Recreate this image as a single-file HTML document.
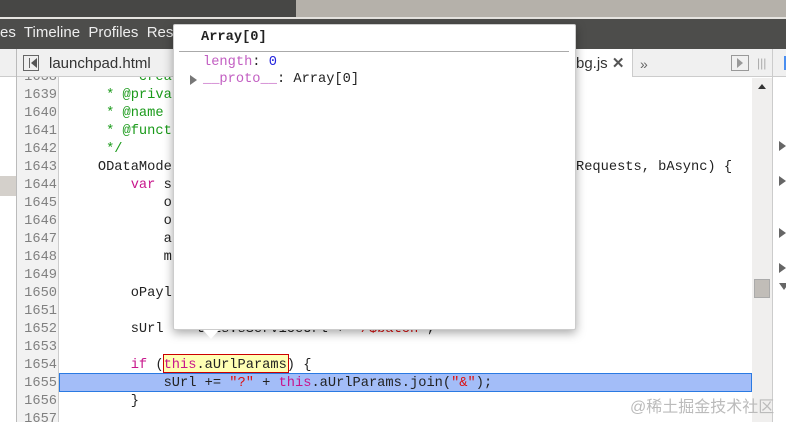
<!DOCTYPE html>
<html><head><meta charset="utf-8"><style>
*{margin:0;padding:0;box-sizing:border-box}
body{width:786px;height:422px;overflow:hidden;background:#fff;position:relative;font-family:"Liberation Sans",sans-serif}
.a{position:absolute}
.mono{font-family:"Liberation Mono",monospace;font-size:13.7px;white-space:pre;line-height:18px}
.ln{position:absolute;left:16px;width:41px;text-align:right;color:#808080;font-family:"Liberation Mono",monospace;font-size:13.7px;line-height:18px}
.cl{position:absolute;left:65px;color:#222}
.g{color:#1a9a1a}.k{color:#c8168c}.s{color:#d11}
</style></head><body>
<div class="a" style="left:0;top:0;width:296px;height:17px;background:#474745"></div>
<div class="a" style="left:296px;top:0;width:490px;height:17px;background:#b5b1aa"></div>
<div class="a" style="left:0;top:17px;width:786px;height:2px;background:#e6e4e0"></div>
<div class="a" style="left:0;top:19px;width:786px;height:30px;background:#4d4d4b"></div>
<div class="a" style="left:0;top:24px;color:#eee;font-size:15px;line-height:18px;white-space:pre">es  Timeline  Profiles  Res</div>
<div class="a" style="left:0;top:49px;width:786px;height:28px;background:#f0f0f0;border-bottom:1px solid #ccc"></div>
<div class="a" style="left:16px;top:49px;width:1px;height:373px;background:#bbb"></div>
<div class="a" style="left:23px;top:55px;width:16px;height:16px;border:1.5px solid #666"></div>
<div class="a" style="left:29px;top:58px;width:1px;height:10px;background:#666"></div>
<div class="a" style="left:31px;top:58px;width:0;height:0;border-top:5px solid transparent;border-bottom:5px solid transparent;border-right:6px solid #555"></div>
<div class="a" style="left:49px;top:54px;color:#333;font-size:15px;line-height:20px">launchpad.html</div>
<div class="a" style="left:575px;top:49px;width:58px;height:28px;background:#fff;border-right:1px solid #ccc"></div>
<div class="a" style="left:576px;top:54px;color:#333;font-size:15px;line-height:20px">bg.js <b style="color:#555">✕</b></div>
<div class="a" style="left:640px;top:54px;color:#666;font-size:14px;line-height:20px">»</div>
<div class="a" style="left:731px;top:55px;width:18px;height:16px;border:1.5px solid #999"></div>
<div class="a" style="left:737px;top:58px;width:0;height:0;border-top:5px solid transparent;border-bottom:5px solid transparent;border-left:6px solid #999"></div>
<div class="a" style="left:757px;top:56px;color:#aaa;font-size:12px">|||</div>
<div class="a" style="left:772px;top:49px;width:1px;height:373px;background:#ccc"></div>
<div class="a" style="left:784px;top:56px;width:2px;height:14px;background:#4a8ef0"></div>
<div class="a" style="left:0;top:77px;width:16px;height:345px;background:#fff"></div>
<div class="a" style="left:0;top:176px;width:16px;height:20px;background:#d4d0cb"></div>
<div class="a" style="left:17px;top:77px;width:42px;height:345px;background:#f2f2f2;border-right:1px solid #ccc"></div>
<div class="a" style="left:752px;top:78px;width:20px;height:344px;background:#f0efee"></div>
<div class="a" style="left:758px;top:84px;width:0;height:0;border-left:4px solid transparent;border-right:4px solid transparent;border-bottom:5px solid #333"></div>
<div class="a" style="left:754px;top:279px;width:16px;height:19px;background:#c1bdb8;border:1px solid #aaa"></div>
<div class="a" style="left:779px;top:141px;border-top:5px solid transparent;border-bottom:5px solid transparent;border-left:7px solid #666"></div>
<div class="a" style="left:779px;top:176px;border-top:5px solid transparent;border-bottom:5px solid transparent;border-left:7px solid #666"></div>
<div class="a" style="left:779px;top:228px;border-top:5px solid transparent;border-bottom:5px solid transparent;border-left:7px solid #666"></div>
<div class="a" style="left:779px;top:263px;border-top:5px solid transparent;border-bottom:5px solid transparent;border-left:7px solid #666"></div>
<div class="a" style="left:779px;top:283px;border-left:5px solid transparent;border-right:5px solid transparent;border-top:7px solid #666"></div>
<div class="a" style="left:59px;top:373px;width:693px;height:19px;background:#a3bdf8;border:1px solid #2a7ae2"></div>
<div class="a" style="left:163px;top:354px;width:126px;height:19px;background:#ffffb4;border:1px solid #c00"></div>
<div style="position:absolute;left:0;top:77px;width:752px;height:345px;overflow:hidden">
<div class="a" style="left:0;top:-8px">
<div class="ln" style="top:0">1638</div><div class="cl mono g" style="top:0">         create</div>
<div class="ln" style="top:18px">1639</div><div class="cl mono g" style="top:18px">     * @priva</div>
<div class="ln" style="top:36px">1640</div><div class="cl mono g" style="top:36px">     * @name</div>
<div class="ln" style="top:54px">1641</div><div class="cl mono g" style="top:54px">     * @funct</div>
<div class="ln" style="top:72px">1642</div><div class="cl mono g" style="top:72px">     */</div>
<div class="ln" style="top:90px">1643</div><div class="cl mono" style="top:90px">    ODataMode</div>
<div class="a mono" style="left:576px;top:90px;color:#222">Requests, bAsync) {</div>
<div class="ln" style="top:108px">1644</div><div class="cl mono" style="top:108px">        <span class="k">var</span> s</div>
<div class="ln" style="top:126px">1645</div><div class="cl mono" style="top:126px">            o</div>
<div class="ln" style="top:144px">1646</div><div class="cl mono" style="top:144px">            o</div>
<div class="ln" style="top:162px">1647</div><div class="cl mono" style="top:162px">            a</div>
<div class="ln" style="top:180px">1648</div><div class="cl mono" style="top:180px">            m</div>
<div class="ln" style="top:198px">1649</div>
<div class="ln" style="top:216px">1650</div><div class="cl mono" style="top:216px">        oPayl</div>
<div class="ln" style="top:234px">1651</div>
<div class="ln" style="top:252px">1652</div><div class="cl mono" style="top:252px">        sUrl  <span class="s">= </span>this.sServiceUrl + <span class="s">"/$batch"</span>;</div>
<div class="ln" style="top:270px">1653</div>
<div class="ln" style="top:288px">1654</div><div class="cl mono" style="top:288px">        <span class="k">if</span> (<span class="k">this</span>.aUrlParams) {</div>
<div class="ln" style="top:306px">1655</div><div class="cl mono" style="top:306px">            sUrl += <span class="s">"?"</span> + <span class="k">this</span>.aUrlParams.join(<span class="s">"&amp;"</span>);</div>
<div class="ln" style="top:324px">1656</div><div class="cl mono" style="top:324px">        }</div>
<div class="ln" style="top:342px">1657</div>
</div></div>
<div class="a" style="left:173px;top:24px;width:403px;height:306px;background:#fff;border:1px solid #ccc;border-radius:2px;box-shadow:0 3px 10px rgba(0,0,0,.35)"></div>
<div class="a" style="left:203px;top:330px;width:0;height:0;border-left:8px solid transparent;border-right:8px solid transparent;border-top:9px solid #fff"></div>
<div class="a mono" style="left:201px;top:29px;font-weight:bold;color:#222">Array[0]</div>
<div class="a" style="left:179px;top:51px;width:390px;height:1px;background:#aaa"></div>
<div class="a mono" style="left:203px;top:54px;color:#222"><span style="color:#c25ec2">length</span>: <span style="color:#2222dd">0</span></div>
<div class="a" style="left:190px;top:75px;border-top:5px solid transparent;border-bottom:5px solid transparent;border-left:7px solid #777"></div>
<div class="a mono" style="left:203px;top:71px;color:#222"><span style="color:#c25ec2">__proto__</span>: Array[0]</div>
<div class="a" style="left:630px;top:398px;color:#bbb;font-family:'Liberation Sans','Noto Sans CJK SC',sans-serif;font-size:16px;line-height:20px">@稀土掘金技术社区</div>
</body></html>
